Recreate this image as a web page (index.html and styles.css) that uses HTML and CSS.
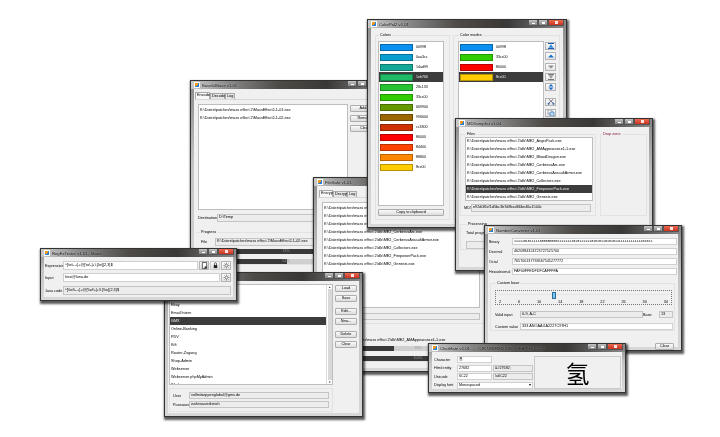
FILE: index.html
```html
<!DOCTYPE html>
<html lang="en">
<head>
    <meta charset="UTF-8">
    <title>Tools</title>
    <link rel="stylesheet" href="styles.css">
</head>
<body>
    <svg class="defs" width="0" height="0">
        <symbol id="i-top" viewBox="0 0 8 6"><path d="M1 0h6v1H1zM1 5h6v1H1z" fill="#1c5fb0"/><path d="M4 1.2 6.5 4.8h-5z" fill="#2b8be0"/></symbol>
        <symbol id="i-up" viewBox="0 0 8 6"><path d="M4 1.5 7 4.5H1z" fill="#1c6fc8"/></symbol>
        <symbol id="i-down" viewBox="0 0 8 6"><path d="M4 4.5 7 1.5H1z" fill="#8a8a8a"/></symbol>
        <symbol id="i-bottom" viewBox="0 0 8 6"><path d="M1 0h6v1H1zM1 5h6v1H1z" fill="#777"/><path d="M4 4.8 6.5 1.2h-5z" fill="#999"/></symbol>
        <symbol id="i-sort" viewBox="0 0 8 6"><path d="M4 0 6.5 2.6h-5zM4 6 6.5 3.4h-5z" fill="#1c6fc8"/></symbol>
        <symbol id="i-cut" viewBox="0 0 8 6"><path d="M1.5 0 6 4M6.5 0 2 4" stroke="#556" stroke-width=".8"/><circle cx="1.6" cy="4.8" r="1" fill="#2b6cb0"/><circle cx="6.4" cy="4.8" r="1" fill="#2b6cb0"/></symbol>
        <symbol id="i-copy" viewBox="0 0 8 6"><path d="M1 0h4v4H1z" fill="#fff" stroke="#667" stroke-width=".6"/><path d="M3 2h4v4H3z" fill="#bcd7f2" stroke="#2b6cb0" stroke-width=".6"/></symbol>
        <symbol id="i-page" viewBox="0 0 8 8"><path d="M1.5 .5h5v7h-5z" fill="#fff" stroke="#333" stroke-width=".9"/><path d="M4 5h3v2.5H4z" fill="#444"/></symbol>
        <symbol id="i-lock" viewBox="0 0 8 8"><path d="M2 3.5h4V7H2z" fill="#222"/><path d="M2.8 3.5V2a1.2 1.2 0 0 1 2.4 0v1.5" fill="none" stroke="#333" stroke-width=".8"/></symbol>
        <symbol id="i-gear" viewBox="0 0 8 8"><path d="M4 .5v7M.5 4h7M1.6 1.6l4.8 4.8M6.4 1.6 1.6 6.4" stroke="#777" stroke-width=".8"/><circle cx="4" cy="4" r="1.5" fill="#eee" stroke="#666" stroke-width=".5"/></symbol>
    </svg>

    <!-- Base64 -->
    <div class="win win-base">
        <div class="title"><i class="appicon"></i><span>Base64Base v1.01</span><div class="ctl"><b class="min"></b><b class="max"></b><b class="close"></b></div></div>
        <div class="panel">
            <div class="tabs"><span class="tab on">Encode</span><span class="tab">Decode</span><span class="tab">Log</span></div>
            <div class="pane">
                <div class="base-top">
                    <div class="list base-list">
                        <div class="row">K:\Daten\patches\mass effect 2\MassEffect2-1-01.exe</div>
                        <div class="row">K:\Daten\patches\mass effect 2\MassEffect2-1-02.exe</div>
                    </div>
                    <div class="stack base-btns"><span class="btn">Add...</span><span class="btn">Remove</span><span class="btn">Clear</span></div>
                </div>
                <div class="form base-dest"><label>Destination</label><span class="field ro">D:\Temp</span></div>
            </div>
            <fieldset class="group base-prog">
                <legend>Progress</legend>
                <div class="form base-file"><label>File</label><span class="field ro">K:\Daten\patches\mass effect 2\MassEffect2-1-02.exe</span></div>
                <div class="bar"><div class="fill" style="width:72%"></div><span>72%</span></div>
                <div class="bar"><div class="fill" style="width:51%"></div><span>51%</span></div>
            </fieldset>
        </div>
    </div>

    <!-- FileSafe -->
    <div class="win win-safe">
        <div class="title"><i class="appicon"></i><span>FileSafe v1.01</span><div class="ctl"><b class="min"></b><b class="max"></b><b class="close"></b></div></div>
        <div class="panel">
            <div class="tabs"><span class="tab on">Encrypt</span><span class="tab">Decrypt</span><span class="tab">Log</span></div>
            <div class="pane">
                <div class="list safe-list">
                    <div class="row">K:\Daten\patches\mass effect 2\dlc\ME2_AegisPack.exe</div>
                    <div class="row">K:\Daten\patches\mass effect 2\dlc\ME2_AMAppearance1-1.exe</div>
                    <div class="row">K:\Daten\patches\mass effect 2\dlc\ME2_BloodDragon.exe</div>
                    <div class="row">K:\Daten\patches\mass effect 2\dlc\ME2_CerberusArc.exe</div>
                    <div class="row">K:\Daten\patches\mass effect 2\dlc\ME2_CerberusAssaultArmor.exe</div>
                    <div class="row">K:\Daten\patches\mass effect 2\dlc\ME2_Collectors.exe</div>
                    <div class="row">K:\Daten\patches\mass effect 2\dlc\ME2_FirepowerPack.exe</div>
                    <div class="row">K:\Daten\patches\mass effect 2\dlc\ME2_Genesis.exe</div>
                </div>
                <span class="field ro safe-dest"></span>
            </div>
            <fieldset class="group safe-prog">
                <span class="field ro safe-file">K:\Daten\patches\mass effect 2\dlc\ME2_AMAppearance1-1.exe</span>
                <div class="bar"><div class="fill" style="width:34%"></div><span>39%</span></div>
                <div class="bar"><div class="fill" style="width:100%"></div><span>100%</span></div>
            </fieldset>
        </div>
    </div>

    <!-- ColorPal -->
    <div class="win win-color">
        <div class="title"><i class="appicon"></i><span>ColorPal2 v1.01</span><div class="ctl"><b class="min"></b><b class="max"></b><b class="close"></b></div></div>
        <div class="panel color-panel">
            <fieldset class="group color-left">
                <legend>Colors</legend>
                <div class="list colors">
                    <div class="swrow"><i class="sw" style="background:#0a90f0"></i>0099ff</div>
                    <div class="swrow"><i class="sw" style="background:#0a9fd0"></i>0aa3cc</div>
                    <div class="swrow"><i class="sw" style="background:#14a898"></i>14ad99</div>
                    <div class="swrow sel"><i class="sw" style="background:#20bb66"></i>1eb766</div>
                    <div class="swrow"><i class="sw" style="background:#28c133"></i>28c133</div>
                    <div class="swrow"><i class="sw" style="background:#33cc00"></i>33cc00</div>
                    <div class="swrow"><i class="sw" style="background:#669900"></i>669900</div>
                    <div class="swrow"><i class="sw" style="background:#996600"></i>996600</div>
                    <div class="swrow"><i class="sw" style="background:#cc3300"></i>cc3300</div>
                    <div class="swrow"><i class="sw" style="background:#ff0000"></i>ff0000</div>
                    <div class="swrow"><i class="sw" style="background:#ff4400"></i>ff4400</div>
                    <div class="swrow"><i class="sw" style="background:#ff8800"></i>ff8800</div>
                    <div class="swrow"><i class="sw" style="background:#ffcc00"></i>ffcc00</div>
                </div>
                <span class="btn copy">Copy to clipboard</span>
            </fieldset>
            <fieldset class="group color-right">
                <legend>Color modes</legend>
                <div class="color-wrap">
                    <div class="list colors modes">
                        <div class="swrow"><i class="sw" style="background:#0a90f0"></i>0099ff</div>
                        <div class="swrow"><i class="sw" style="background:#33cc00"></i>33cc00</div>
                        <div class="swrow"><i class="sw" style="background:#ff0000"></i>ff0000</div>
                        <div class="swrow sel"><i class="sw" style="background:#ffcc00"></i>ffcc00</div>
                    </div>
                    <div class="tools">
                        <span class="tool"><svg><use href="#i-top"/></svg></span>
                        <span class="tool"><svg><use href="#i-up"/></svg></span>
                        <span class="tool"><svg><use href="#i-down"/></svg></span>
                        <span class="tool"><svg><use href="#i-bottom"/></svg></span>
                        <span class="tool"><svg><use href="#i-sort"/></svg></span>
                        <span class="tool gap"><svg><use href="#i-cut"/></svg></span>
                        <span class="tool"><svg><use href="#i-copy"/></svg></span>
                    </div>
                </div>
            </fieldset>
        </div>
    </div>

    <!-- MD5 -->
    <div class="win win-md5">
        <div class="title"><i class="appicon"></i><span>MD5simplist v1.04</span><div class="ctl"><b class="min"></b><b class="max"></b><b class="close"></b></div></div>
        <div class="panel">
            <div class="md5-top">
                <fieldset class="group md5-files">
                    <legend>Files</legend>
                    <div class="list md5-list">
                        <div class="row">K:\Daten\patches\mass effect 2\dlc\ME2_AegisPack.exe</div>
                        <div class="row">K:\Daten\patches\mass effect 2\dlc\ME2_AMAppearance1-1.exe</div>
                        <div class="row">K:\Daten\patches\mass effect 2\dlc\ME2_BloodDragon.exe</div>
                        <div class="row">K:\Daten\patches\mass effect 2\dlc\ME2_CerberusArc.exe</div>
                        <div class="row">K:\Daten\patches\mass effect 2\dlc\ME2_CerberusAssaultArmor.exe</div>
                        <div class="row">K:\Daten\patches\mass effect 2\dlc\ME2_Collectors.exe</div>
                        <div class="row sel">K:\Daten\patches\mass effect 2\dlc\ME2_FirepowerPack.exe</div>
                        <div class="row">K:\Daten\patches\mass effect 2\dlc\ME2_Genesis.exe</div>
                    </div>
                    <div class="form md5-sum"><label>MD5</label><span class="field ro">e92d0f6cf1d5bc3b7d8bcd66be46a1504c</span></div>
                </fieldset>
                <fieldset class="group md5-drop"><legend>Drop zone</legend></fieldset>
            </div>
            <fieldset class="group md5-proc">
                <legend>Processing</legend>
                <div class="md5-total">Total progress</div>
                <span class="field ro"></span>
            </fieldset>
        </div>
    </div>

    <!-- NumberConverter -->
    <div class="win win-num">
        <div class="title"><i class="appicon"></i><span>NumberConverter v1.01</span><div class="ctl"><b class="min"></b><b class="max"></b><b class="close"></b></div></div>
        <div class="panel num-panel">
            <div class="form num-form">
                <label>Binary</label><span class="field bin">1111101011111000000000111111110101111110101011010101111111111111101011</span>
                <label>Decimal</label><span class="field">4620984324723727525700</span>
                <label>Octal</label><span class="field">765700137733667545277772</span>
                <label>Hexadecimal</label><span class="field">FAF00FFEDFDFCAFFFFA</span>
            </div>
            <fieldset class="group num-base">
                <legend>Custom base</legend>
                <div class="slider">
                    <div class="track"><i class="thumb"></i></div>
                    <div class="ticks"><span>2</span><span>6</span><span>10</span><span>14</span><span>18</span><span>22</span><span>26</span><span>30</span><span>34</span></div>
                </div>
                <div class="form num-valid"><label>Valid input</label><span class="field ro">0-9, A-C</span><label>Base</label><span class="field ro">13</span></div>
                <div class="form num-custom"><label>Custom value</label><span class="field">333 ANOAA 6A2227C97H1</span></div>
            </fieldset>
            <div class="num-foot"><span class="btn">Clear</span></div>
        </div>
    </div>

    <!-- Passwords -->
    <div class="win win-pass">
        <div class="title"><i class="appicon"></i><span>PassVault v1.01</span><div class="ctl"><b class="min"></b><b class="max"></b><b class="close"></b></div></div>
        <div class="panel pass-panel">
            <div class="pass-main">
                <div class="list pass-list">
                    <div class="pass-rows">
                        <div class="row">Amazon</div>
                        <div class="row">Bank</div>
                        <div class="row">Ebay</div>
                        <div class="row">Email Intern</div>
                        <div class="row sel">GMX</div>
                        <div class="row">Online-Banking</div>
                        <div class="row">PDV</div>
                        <div class="row">Kift</div>
                        <div class="row">Router-Zugang</div>
                        <div class="row">Shop-Admin</div>
                        <div class="row">Webserver</div>
                        <div class="row">Webserver phpMyAdmin</div>
                        <div class="row">Work</div>
                    </div>
                    <div class="scroll"><i>&#9652;</i><b></b><i>&#9662;</i></div>
                </div>
                <fieldset class="group pass-cred">
                    <div class="form"><label>User</label><span class="field ro">vollmitwippenglobal@gmx.de</span><label>Password</label><span class="field ro">wahrwasistkmich</span></div>
                </fieldset>
            </div>
            <div class="stack pass-btns">
                <span class="btn">Load</span><span class="btn">Save</span>
                <span class="btn gap">Edit...</span><span class="btn">New...</span>
                <span class="btn gap">Delete</span><span class="btn">Clear</span>
            </div>
        </div>
    </div>

    <!-- RegEx -->
    <div class="win win-regex">
        <div class="title"><i class="appicon"></i><span>RegExTester v1.01 - Match</span><div class="ctl"><b class="min"></b><b class="max"></b><b class="close"></b></div></div>
        <div class="panel regex-panel">
            <div class="regex-row"><label>Expression</label><span class="field">^[\w\-.+]+@[\w\-]+\.[\w]{2,3}$</span><span class="tool big"><svg><use href="#i-page"/></svg></span><span class="tool big flat"><svg><use href="#i-lock"/></svg></span><span class="tool big"><svg><use href="#i-gear"/></svg></span></div>
            <div class="regex-row"><label>Input</label><span class="field">hirsi@luna.de</span><span class="tool big"><svg><use href="#i-gear"/></svg></span></div>
            <div class="regex-row java"><label>Java code</label><span class="field ro">^[\\w\\-.+]+@[\\w\\-]+\\.[\\w]{2,3}$</span></div>
        </div>
    </div>

    <!-- CharMap -->
    <div class="win win-char">
        <div class="title"><i class="appicon"></i><span>CharMate v1.01 &nbsp; - &nbsp; CJK UNIFIED IDEOGRAPHS 6C22</span><div class="ctl"><b class="min"></b><b class="max"></b><b class="close"></b></div></div>
        <div class="panel char-panel">
            <div class="char-form">
                <label>Character</label><span class="field">氢</span><i></i>
                <label>Html entity</label><span class="field">27682</span><span class="field ro">&amp;#27682;</span>
                <label>Unicode</label><span class="field">6C22</span><span class="field ro">\u6C22</span>
                <label>Display font</label><span class="field combo">Monospaced<em>&#9662;</em></span>
            </div>
            <div class="char-big">氢</div>
        </div>
    </div>
</body>
</html>
```

FILE: styles.css
```css
html, body {
    margin: 0;
    height: 100%;
    background: #fff;
    overflow: hidden;
}
body {
    font-family: "Liberation Sans", sans-serif;
    font-size: 3.8px;
    color: #000;
}
.defs { display: block; }

/* window frame */
.win {
    position: absolute;
    box-sizing: border-box;
    display: flex;
    flex-direction: column;
    border: 1px solid #333;
    padding: 0 3px 3px;
    background: linear-gradient(#8a8a8a, #c4c4c4 40%, #d8d8d8);
    box-shadow: 1px 2px 2px 1px rgba(0,0,0,.65);
    overflow: hidden;
    filter: blur(.2px);
}
.win-base  { left: 190px; top: 80px;  width: 196px; height: 212px; }
.win-safe  { left: 313px; top: 177px; width: 175px; height: 195px; }
.win-color { left: 367px; top: 19px;  width: 200px; height: 209px; }
.win-md5   { left: 455px; top: 118px; width: 198px; height: 153px; }
.win-num   { left: 484px; top: 225px; width: 198px; height: 126px; }
.win-pass  { left: 164px; top: 272px; width: 199px; height: 145px; }
.win-regex { left: 40px;  top: 248px; width: 197px; height: 53px; }
.win-char  { left: 428px; top: 343px; width: 198px; height: 50px; }

.title {
    flex: none;
    height: 8px;
    margin: 0 -3px;
    padding-left: 3px;
    display: flex;
    align-items: center;
    gap: 2px;
    font-size: 4.2px;
    color: #111;
    white-space: nowrap;
    background: linear-gradient(90deg, #c9c9c9, #8d8d8d 18%, #4d4a47 45%, #3a3836 70%, #8a8a8a);
}
.title span { text-shadow: 0 0 2px rgba(255,255,255,.8); }
.appicon {
    width: 4px;
    height: 4px;
    background: linear-gradient(135deg, #f39a1e 50%, #2b7fd0 50%);
    border: .5px solid #fff;
}
.ctl {
    margin: -2px 2px 0 auto;
    display: flex;
    height: 6px;
}
.ctl b {
    width: 8px;
    background: linear-gradient(#c4c4c4, #858585);
    border: .5px solid #555;
    border-top: 0;
    position: relative;
}
.ctl .close { width: 14px; background: linear-gradient(#ec6a52, #cc3322); }
.ctl b::after {
    content: "";
    position: absolute;
    left: 50%;
    top: 50%;
    width: 3px;
    height: 2px;
    margin: -1px 0 0 -1.5px;
    border: .6px solid #fff;
    box-sizing: border-box;
}
.ctl .min::after { height: 1px; margin-top: 0; background: #fff; border: 0; }
.ctl .close::after { background: #fff; opacity: .85; border: 0; width: 3px; height: 3px; margin-top: -1.5px; }

.panel {
    flex: 1;
    min-height: 0;
    background: #f0f0f0;
}

/* shared widgets */
.group {
    box-sizing: border-box;
    margin: 0;
    padding: 0;
    border: 1px solid #e2e2e2;
    min-width: 0;
}
legend {
    padding: 0 1px;
    margin-left: 1px;
    font-size: 3.8px;
    line-height: 5px;
}
.list {
    box-sizing: border-box;
    background: #fff;
    border: 1px solid #bdbdbd;
    overflow: hidden;
}
.row {
    height: 8px;
    line-height: 8px;
    padding-left: 1px;
    white-space: nowrap;
}
.sel {
    background: #3c3c3c;
    color: #eee;
}
.field {
    box-sizing: border-box;
    display: block;
    height: 7px;
    line-height: 5px;
    padding: 0 1px;
    background: #fff;
    border: 1px solid #d0d0d0;
    white-space: nowrap;
    overflow: hidden;
}
.field.ro { background: #ececec; border-color: #c4c4c4; }
.btn {
    box-sizing: border-box;
    display: block;
    height: 7px;
    line-height: 5px;
    text-align: center;
    border: 1px solid #adadad;
    border-radius: 1px;
    background: linear-gradient(#fafafa, #dcdcdc);
    white-space: nowrap;
}
.stack { display: flex; flex-direction: column; }
.form {
    display: grid;
    align-items: center;
}
label { white-space: nowrap; }
.tool {
    box-sizing: border-box;
    display: flex;
    align-items: center;
    justify-content: center;
    width: 11px;
    height: 8px;
    border: 1px solid #b4b4b4;
    background: linear-gradient(#fdfdfd, #e4e4e4);
}
.tool svg { width: 8px; height: 6px; }
.bar {
    position: relative;
    height: 5px;
    line-height: 5px;
    background: #cfcfcf;
    text-align: center;
}
.fill {
    height: 100%;
    background: #3a3a3a;
}
.bar span {
    position: absolute;
    left: 0;
    right: 0;
    top: 0;
    color: #9a9a9a;
    font-size: 3.5px;
}

/* tabs */
.tabs {
    display: flex;
    align-items: flex-end;
    height: 6px;
}
.tab {
    box-sizing: border-box;
    height: 6px;
    line-height: 5px;
    padding: 0 1px;
    border: .5px solid #aaa;
    border-bottom: 0;
    background: #e6e6e6;
    text-align: center;
}
.tab.on { background: #f8f8f8; height: 7px; }
.pane {
    border-top: 1px solid #d8d8d8;
}

/* base64 */
.win-base .panel { padding: 4px 0 0 1px; }
.win-base .tab { width: 15px; }
.win-base .tab:last-child { width: 10px; }
.win-base .pane { padding: 4px 3px 0 3px; }
.base-top { display: flex; gap: 2px; }
.base-list { flex: none; width: 150px; height: 106px; padding-top: 1px; }
.base-btns { gap: 3px; flex: 1; margin-top: 1px; }
.base-dest { grid-template-columns: 19px 1fr; margin-top: 4px; }
.base-dest .field { height: 8px; }
.base-prog { margin: 8px 0 0 1px; border-left: 0; border-right: 0; }
.base-prog legend { margin-left: 4px; }
.base-file { grid-template-columns: 14px 1fr; padding-left: 5px; margin-top: 3px; }
.base-file .field { height: 8px; }
.base-prog .bar { margin: 3px 25px 0 19px; }
.base-prog .bar + .bar { margin-top: 5px; }

/* filesafe */
.win-safe .panel { padding: 5px 0 0 1px; }
.win-safe .tabs { margin-left: 1px; }
.win-safe .tab { width: 14px; }
.win-safe .tab:last-child { width: 10px; }
.win-safe .pane { padding: 4px 4px 0 4px; }
.safe-list { height: 106px; padding-top: 1px; }
.safe-dest { margin-top: 5px; }
.safe-prog { margin-top: 3px; border-left: 0; border-right: 0; padding: 13px 0 0 17px; }
.field.safe-file { height: 7px; background: none; border-color: transparent; }
.safe-prog .bar { margin: 2px 0 0 9px; width: 148px; }
.safe-prog .bar + .bar { margin-top: 5px; }

/* colorpal */
.color-panel {
    display: flex;
    gap: 3px;
    padding: 5px 4px 4px;
}
.color-left { flex: none; width: 75px; padding: 0 5px 3px 2px; }
.color-right { flex: none; width: 107px; padding: 0 3px 3px 4px; }
.colors { width: 66px; height: 165px; margin-top: 3px; }
.swrow {
    height: 10px;
    display: flex;
    align-items: center;
    gap: 3px;
    padding-left: 1px;
    font-size: 3.6px;
}
.sw {
    width: 33px;
    height: 7px;
    box-sizing: border-box;
    border: 1px solid rgba(0,0,0,.28);
}
.copy { margin-top: 3px; width: 66px; }
.color-wrap { display: flex; gap: 1px; }
.modes { width: 86px; }
.tools {
    display: flex;
    flex-direction: column;
    gap: 2.3px;
    margin-top: 4px;
}
.tools .gap { margin-top: 5px; }

/* md5 */
.win-md5 .panel { padding: 5px 2px 0 1px; }
.md5-top { display: flex; gap: 4px; }
.md5-files { flex: none; width: 136px; padding: 0 0 3px 4px; }
.md5-list { width: 128px; height: 64px; }
.md5-list .row:first-child { margin-top: -1px; }
.md5-sum { grid-template-columns: 7px 120px; margin: 3px 0 0 -1px; }
.md5-sum .field { height: 8px; }
.md5-drop { flex: 1; }
.md5-drop legend { color: #8c1a3a; }
.md5-proc { margin-top: 6px; padding: 4px 5px 0; }
.md5-total { height: 5px; line-height: 5px; }
.md5-proc .field { margin-top: 5px; height: 8px; }

/* number converter */
.num-panel { padding: 4px 2px 0 1px; }
.num-form {
    grid-template-columns: 23px 165px;
    row-gap: 3px;
    font-size: 3.7px;
}
.num-form .bin { font-family: "Liberation Mono", monospace; font-size: 3.3px; }
.num-base { margin: 6px 1px 0 1px; padding: 0 2px 0 4px; }
.slider {
    box-sizing: border-box;
    height: 15px;
    margin-top: 4px;
    border: .5px dotted #777;
    padding: 0 2px;
}
.track {
    position: relative;
    height: 7px;
    background: linear-gradient(#e4e4e4, #e4e4e4) center / 100% 1px no-repeat;
}
.thumb {
    position: absolute;
    left: 54px;
    top: 1px;
    width: 2px;
    height: 5px;
    background: #7cc6ee;
    border: .5px solid #2a6ea0;
}
.ticks {
    display: flex;
    justify-content: space-between;
    padding: 2px 1px 0;
    line-height: 4px;
}
.num-valid { grid-template-columns: 25px 123px 16px 14px; margin-top: 6px; }
.num-custom { grid-template-columns: 25px 153px; margin-top: 5px; }
.num-foot { display: flex; justify-content: flex-end; padding: 12px 2px 0 0; }
.num-foot .btn { width: 19px; }

/* passwords */
.pass-panel {
    display: flex;
    gap: 2px;
    padding: 3px 0 0 1px;
}
.pass-main { flex: none; width: 164px; }
.pass-list {
    height: 101px;
    display: flex;
}
.pass-rows { flex: 1; min-width: 0; }
.scroll {
    flex: none;
    width: 5px;
    display: flex;
    flex-direction: column;
    align-items: center;
    border-left: .5px solid #ddd;
    font-size: 3px;
    line-height: 4px;
}
.scroll i { font-style: normal; }
.scroll b { flex: 1; width: 4px; background: #d9d9d9; }
.pass-cred { margin-top: 3px; padding: 3px; }
.pass-cred .form { grid-template-columns: 16px 140px; row-gap: 2px; }
.pass-btns { width: 22px; gap: 3px; margin-top: 1px; }
.pass-btns .gap { margin-top: 3px; }

/* regex */
.regex-panel {
    display: flex;
    flex-direction: column;
    padding: 4px 2px 0 1px;
    gap: 3px;
}
.regex-row {
    display: flex;
    align-items: center;
    gap: 1px;
}
.regex-row label { flex: none; width: 17px; }
.regex-row .field { flex: 1; height: 9px; line-height: 7px; min-width: 0; }
.java { margin-top: 1px; }
.tool.big { width: 10px; height: 9px; }
.tool.flat { border-color: #ccc; }
.tool.big svg { width: 7px; height: 7px; }

/* charmap */
.char-panel {
    display: flex;
    gap: 1px;
    padding: 4px 1px 0 2px;
}
.char-form {
    flex: none;
    display: grid;
    grid-template-columns: 22px 35px 40px;
    column-gap: 1px;
    row-gap: 1.5px;
    align-items: center;
    font-size: 3.7px;
    align-content: start;
}
.combo { grid-column: span 2; position: relative; }
.combo em { position: absolute; right: 1px; top: 0; font-style: normal; }
.char-big {
    flex: 1;
    height: 33px;
    box-sizing: border-box;
    border: 1px solid #c8c8c8;
    display: flex;
    align-items: center;
    justify-content: center;
    font: 24px/1 "Noto Sans CJK SC", sans-serif;
}
.char-form .field { font-family: "Liberation Sans", "Noto Sans CJK SC", sans-serif; }
```
